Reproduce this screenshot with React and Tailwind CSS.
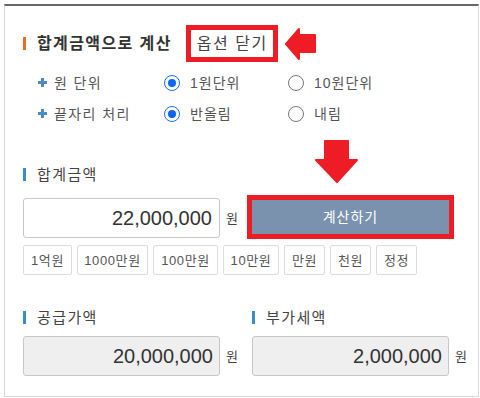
import React from 'react';

const CHIPS = [
  { label: '1억원', w: 'w-[49px]' },
  { label: '1000만원', w: 'w-[71px]' },
  { label: '100만원', w: 'w-[65px]' },
  { label: '10만원', w: 'w-[56px]' },
  { label: '만원', w: 'w-[41px]' },
  { label: '천원', w: 'w-[41px]' },
  { label: '정정', w: 'w-[41px]' },
];

function Plus() {
  return (
    <svg width="9" height="9" viewBox="0 0 9 9" className="mr-[7px] shrink-0">
      <rect x="3" y="0" width="3" height="9" fill="#4a8cc4" />
      <rect x="0" y="3" width="9" height="3" fill="#4a8cc4" />
    </svg>
  );
}

function Radio({ checked, label }) {
  return (
    <label className="flex items-center gap-[10px] w-[124px]">
      {checked ? (
        <span className="w-4 h-4 rounded-full border-[1.5px] border-[#1a6fe6] flex items-center justify-center">
          <span className="w-[8px] h-[8px] rounded-full bg-[#0b66f0]" />
        </span>
      ) : (
        <span className="w-4 h-4 rounded-full border border-[#767676]" />
      )}
      <span className="text-[14px] text-[#555] leading-none tracking-[1px]">{label}</span>
    </label>
  );
}

function SectionLabel({ children }) {
  return (
    <div className="flex items-center h-5">
      <span className="w-[3px] h-[13px] bg-[#3a8ccc] mr-[11px]" />
      <span className="text-[15px] text-[#444] leading-none tracking-[1.4px]">{children}</span>
    </div>
  );
}

function AmountBox({ value, readOnly }) {
  return (
    <div className="flex items-center">
      <div
        className={
          readOnly
            ? 'w-[197px] h-10 border border-[#c8c8c8] rounded-[3px] bg-[#efefef] flex items-center justify-end pr-[6px] text-[20px] text-[#333]'
            : 'w-[197px] h-10 border border-[#c8c8c8] rounded-[3px] bg-white flex items-center justify-end pr-[7px] text-[20px] text-[#333]'
        }
      >
        {value}
      </div>
      <span className="ml-[6px] text-[13px] text-[#444] leading-none">원</span>
    </div>
  );
}

export default function App() {
  return (
    <div className="w-[480px] h-[398px] bg-white pt-1 pl-1 font-['Liberation_Sans','Noto_Sans_CJK_KR',sans-serif]">
      <div className="relative w-[475px] h-[393px] border border-[#d8d8d8] border-t-2 border-t-[#666] pl-[18px] pt-[19px]">
        {/* title */}
        <div className="flex items-center h-[37px]">
          <span className="w-[3px] h-[13px] bg-[#f26a21] mr-[11px]" />
          <h2 className="text-[16px] font-bold text-[#333] leading-none tracking-[1.4px]">합계금액으로 계산</h2>
          <div className="ml-[14px] h-[37px] border-[5px] border-[#ee1c25] pl-[6px] pr-[5px] flex items-center text-[16px] text-[#444] leading-none tracking-[1.5px]">
            옵션 닫기
          </div>
          <svg width="32" height="34" viewBox="0 0 32 34" className="ml-[7px]">
            <path
              d="M1 17 L14 2 L14 8 L30 8 L30 25 L14 25 L14 32 Z"
              fill="#ee1c25"
              stroke="#ee1c25"
              strokeWidth="2"
              strokeLinejoin="round"
            />
          </svg>
        </div>

        {/* options */}
        <div className="mt-[5px] pl-[15px]">
          <div className="flex items-center h-[31px]">
            <Plus />
            <span className="w-[110px] text-[14px] text-[#555] leading-none tracking-[1.4px]">원 단위</span>
            <Radio checked label="1원단위" />
            <Radio label="10원단위" />
          </div>
          <div className="flex items-center h-[31px]">
            <Plus />
            <span className="w-[110px] text-[14px] text-[#555] leading-none tracking-[1.4px]">끝자리 처리</span>
            <Radio checked label="반올림" />
            <Radio label="내림" />
          </div>
        </div>

        {/* total */}
        <div className="mt-[35px]">
          <SectionLabel>합계금액</SectionLabel>
        </div>
        <div className="mt-[11px] flex items-end">
          <div className="mb-px">
            <AmountBox value="22,000,000" />
          </div>
          <button className="ml-[9px] w-[207px] h-[44px] border-[5px] border-[#ee1c25] bg-[#7a92ad] text-white text-[14px] leading-none tracking-[1px]">
            계산하기
          </button>
        </div>
        <div className="mt-[6px] flex gap-[5px]">
          {CHIPS.map((c) => (
            <button
              key={c.label}
              className={`${c.w} h-[30px] border border-[#dcdcdc] rounded-[2px] bg-white text-[13px] text-[#555] leading-none tracking-[0.6px]`}
            >
              {c.label}
            </button>
          ))}
        </div>

        {/* supply / vat */}
        <div className="mt-[32px] grid grid-cols-[229px_1fr]">
          <div>
            <SectionLabel>공급가액</SectionLabel>
            <div className="mt-[9px]">
              <AmountBox value="20,000,000" readOnly />
            </div>
          </div>
          <div>
            <SectionLabel>부가세액</SectionLabel>
            <div className="mt-[9px]">
              <AmountBox value="2,000,000" readOnly />
            </div>
          </div>
        </div>

        {/* annotation arrow */}
        <svg width="44" height="44" viewBox="0 0 44 44" className="absolute left-[310px] top-[134px]">
          <path
            d="M10 1 L33 1 L33 20 L42 20 L22 42 L1 20 L10 20 Z"
            fill="#ee1c25"
            stroke="#ee1c25"
            strokeWidth="2"
            strokeLinejoin="round"
          />
        </svg>
      </div>
    </div>
  );
}
